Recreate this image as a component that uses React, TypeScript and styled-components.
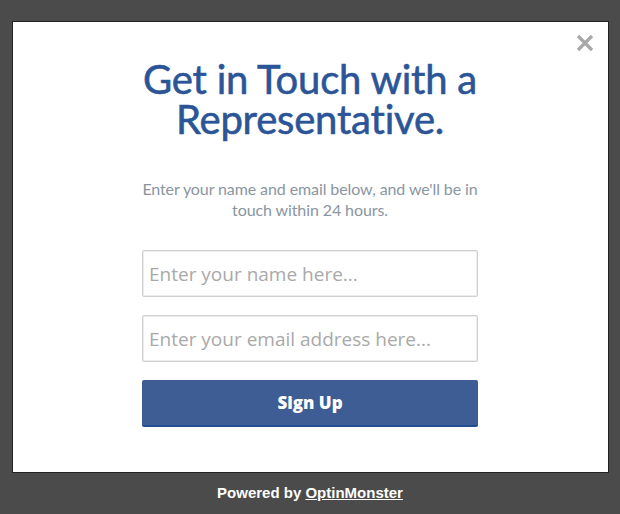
import styled, { createGlobalStyle } from 'styled-components'

const GlobalStyle = createGlobalStyle`
  html, body {
    margin: 0;
    padding: 0;
    background: #4b4b4b;
  }
  * { box-sizing: border-box; }
`

const Page = styled.div`
  width: 620px;
  height: 514px;
  display: flex;
  flex-direction: column;
  align-items: center;
  padding-top: 21px;
  background: #4b4b4b;
`

const Modal = styled.div`
  position: relative;
  width: 597px;
  height: 452px;
  background: #fff;
  border: 1px solid #222;
  display: flex;
  flex-direction: column;
  align-items: center;
  padding-top: 37px;
`

const Close = styled.button`
  position: absolute;
  top: 11px;
  right: 13px;
  width: 20px;
  height: 20px;
  padding: 0;
  border: 0;
  background: none;
  cursor: pointer;
`

const Title = styled.h1`
  margin: 0;
  font-family: Lato, 'Open Sans', sans-serif;
  font-weight: 400;
  font-size: 40px;
  line-height: 40px;
  color: #2c5597;
  -webkit-text-stroke: 0.6px #2c5597;
  text-align: center;
  letter-spacing: -0.2px;
`

const Subtitle = styled.p`
  margin: 39px 0 0;
  width: 350px;
  font-family: Lato, 'Open Sans', sans-serif;
  font-size: 16px;
  line-height: 21px;
  letter-spacing: -0.1px;
  color: #8a96a1;
  text-align: center;
`

const Form = styled.form`
  width: 336px;
  margin-top: 30px;
  display: flex;
  flex-direction: column;
  gap: 18px;
`

const Input = styled.input`
  width: 100%;
  height: 47px;
  padding: 0 6px;
  border: 1px solid #d0d0d0;
  border-radius: 2px;
  box-shadow: inset 0 0 0 1px #ececec;
  font-family: 'Open Sans', sans-serif;
  font-size: 19px;
  color: #555;
  outline: none;

  &::placeholder {
    color: #a9a9a9;
  }
`

const Button = styled.button`
  width: 100%;
  height: 47px;
  border: 0;
  border-bottom: 2px solid #1f4f92;
  border-radius: 2px;
  background: #3d5d94;
  color: #fff;
  font-family: 'Open Sans', sans-serif;
  font-weight: 800;
  font-size: 17px;
  cursor: pointer;
`

const Footer = styled.div`
  margin-top: 11px;
  font-family: 'Liberation Sans', Arial, sans-serif;
  font-weight: 700;
  font-size: 15px;
  color: #fff;

  & > a {
    color: #fff;
    text-decoration: underline;
  }
`

const CloseIcon = () => (
  <svg width={20} height={20} viewBox='0 0 20 20'>
    <path d='M3 3 L17 17 M17 3 L3 17' stroke='#a8a8a8' strokeWidth={3.2} strokeLinecap='butt' />
  </svg>
)

const App = () => {
  return (
    <>
      <GlobalStyle />
      <Page>
        <Modal>
          <Close aria-label='Close'>
            <CloseIcon />
          </Close>
          <Title>
            Get in Touch with a<br />Representative.
          </Title>
          <Subtitle>
            Enter your name and email below, and we'll be in touch within 24 hours.
          </Subtitle>
          <Form onSubmit={e => e.preventDefault()}>
            <Input type='text' placeholder='Enter your name here...' />
            <Input type='email' placeholder='Enter your email address here...' />
            <Button type='submit'>Sign Up</Button>
          </Form>
        </Modal>
        <Footer>
          Powered by <a href='#'>OptinMonster</a>
        </Footer>
      </Page>
    </>
  )
}

export default App
